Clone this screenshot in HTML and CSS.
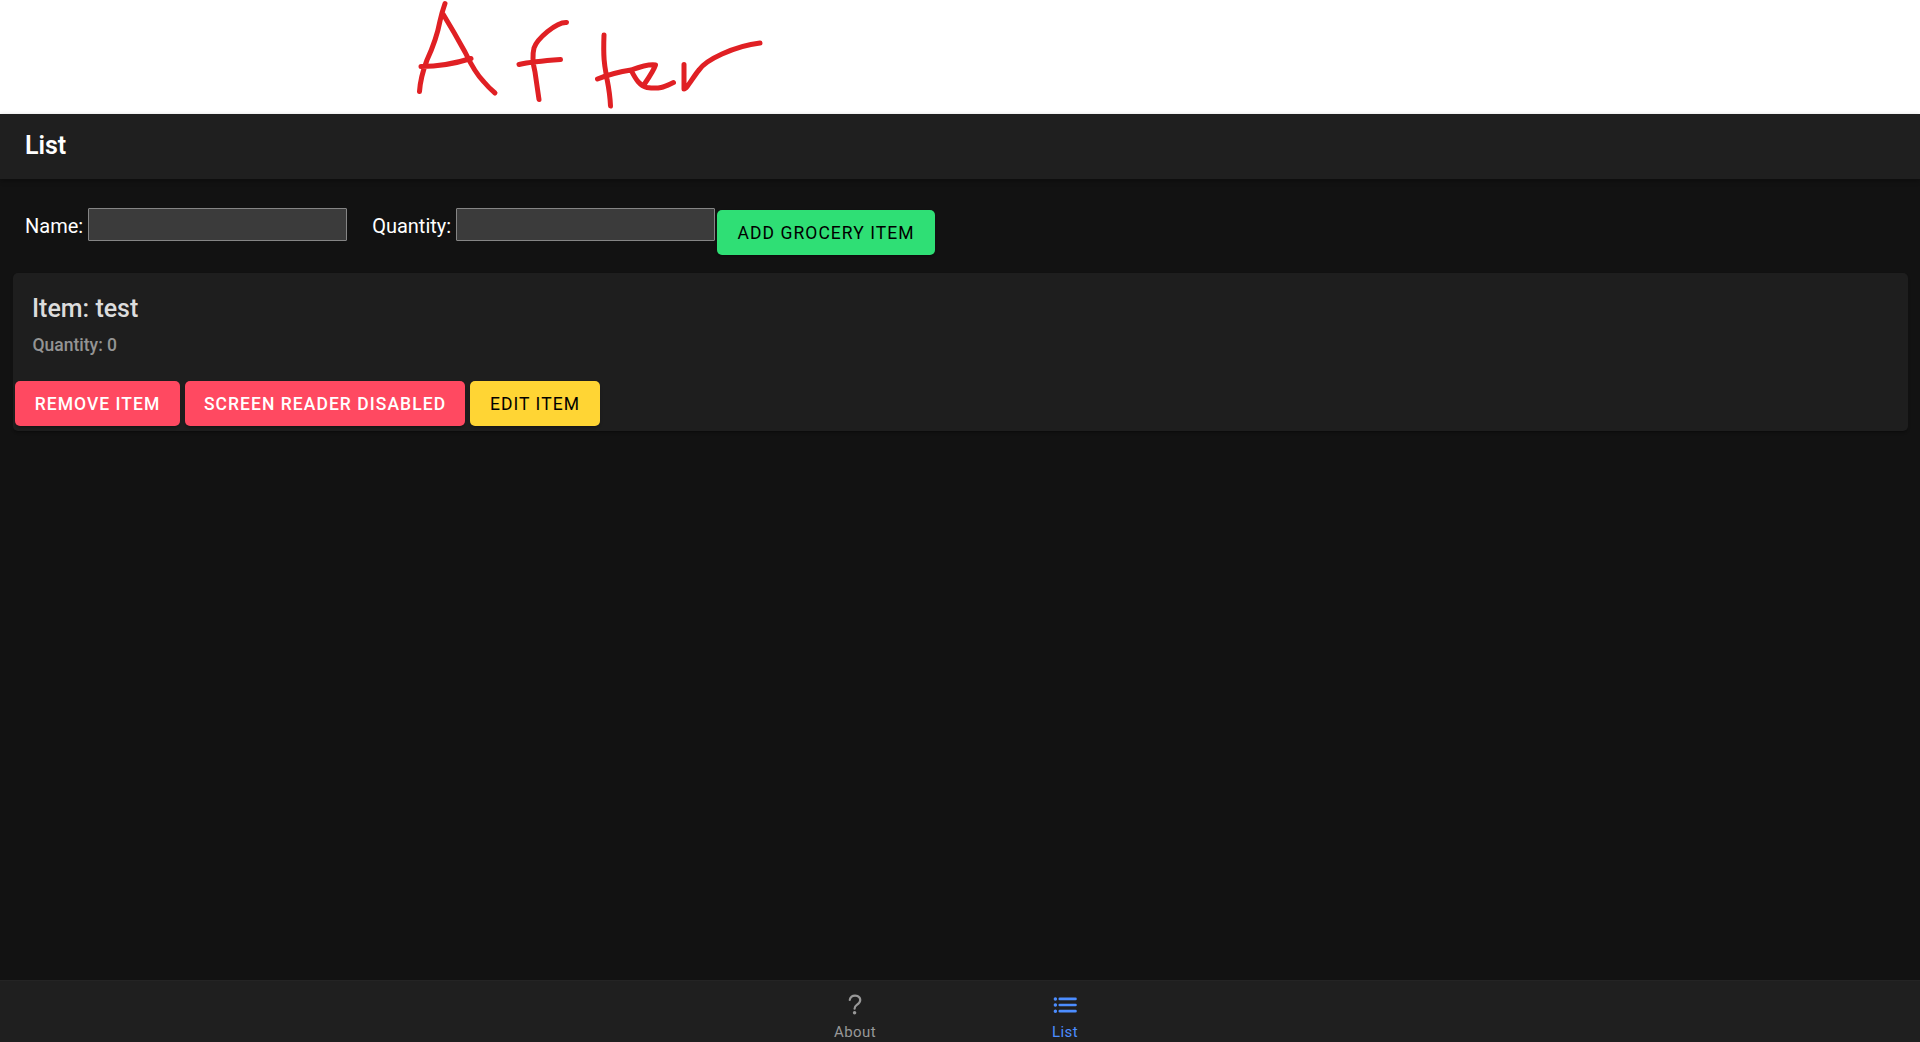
FILE: index.html
```html
<!DOCTYPE html>
<html lang="en">
<head>
<meta charset="utf-8">
<title>List</title>
<link rel="stylesheet" href="styles.css">
</head>
<body>
<div class="note">
  <svg class="ink" width="1920" height="114" viewBox="0 0 1920 114" role="img" aria-label="After">
    <path d="M445 3.500Q442 12 440 21C437 37 433 47 427 60Q420.500 77 419.500 91.500M443 14Q454 32 465 52Q475 73 484 82Q489 88 495 93M421 66.500C437 66.500 452 64.500 471 58.500"/>
    <path d="M566.500 22.500C556 22 537 39 534 48Q531.500 58 535 72L539 99.500M519 64.500Q532 61.500 560.500 59.500"/>
    <path d="M604 35C603 62 605 67 607 79Q610 94 610.500 106M597.500 79C605 76 617 72 631 70C645 65 651 64 655.500 65Q654 70 644.500 84M631 70C636 80 640 86 647 87.500C661 89.500 665 86.500 673.500 82.500M684 64.500V89C687 89 693 77 699 70C703 64 711 59 722 54Q742 45 760 43"/>
  </svg>
</div>
<header class="header"><h1 class="header-title">List</h1></header>
<main class="content">
  <form class="entry">
    <label class="field"><span class="field-label">Name:</span><input class="input" type="text"></label>
    <label class="field"><span class="field-label">Quantity:</span><input class="input" type="text"></label>
    <button class="button success" type="button">Add Grocery Item</button>
  </form>
  <article class="card">
    <h2 class="card-title">Item: test</h2>
    <p class="card-subtitle">Quantity: 0</p>
    <div class="actions">
      <button class="button danger" type="button">Remove Item</button>
      <button class="button danger wide" type="button">Screen Reader Disabled</button>
      <button class="button warning" type="button">Edit Item</button>
    </div>
  </article>
</main>
<nav class="tabs">
  <a class="tab">
    <svg class="icon" viewBox="0 0 512 512"><path d="M160 164s1.440-33 33.540-59.460C212.600 88.830 235.490 84.280 256 84c18.730-.23 35.470 2.940 45.480 7.820C318.590 100.200 352 120.600 352 164c0 45.670-29.180 66.370-62.350 89.180S248 298.360 248 324" fill="none" stroke="currentColor" stroke-width="40" stroke-miterlimit="10" stroke-linecap="round"/><circle cx="248" cy="399.990" r="32" fill="currentColor"/></svg>
    <span>About</span>
  </a>
  <a class="tab selected">
    <svg class="icon" viewBox="0 0 512 512" fill="none" stroke="currentColor" stroke-width="48" stroke-linecap="round"><path d="M160 144h288M160 256h288M160 368h288"/><g stroke-width="32"><circle cx="80" cy="144" r="16"/><circle cx="80" cy="256" r="16"/><circle cx="80" cy="368" r="16"/></g></svg>
    <span>List</span>
  </a>
</nav>
</body>
</html>
```
FILE: styles.css
```css
* { box-sizing: border-box; }
body {
  margin: 0;
  height: 100vh;
  display: flex;
  flex-direction: column;
  overflow: hidden;
  background: #121212;
  color: #fff;
  font-family: Roboto, sans-serif;
}
.note { height: 114px; flex: none; background: #fff; }
.ink {
  display: block;
  fill: none;
  stroke: #e02024;
  stroke-width: 5;
  stroke-linecap: round;
  stroke-linejoin: round;
}
.header {
  height: 65px;
  flex: none;
  display: flex;
  align-items: center;
  padding: 0 25px 1px;
  background: #1f1f1f;
  box-shadow: 0 2px 5px rgba(0, 0, 0, .3);
}
.header-title { margin: 0; font-size: 25px; font-weight: 600; line-height: 30px; }
.content { flex: 1; padding: 29px 12px 0 13px; }
.entry { display: flex; align-items: flex-start; padding-left: 12px; height: 65px; }
.field { display: flex; align-items: flex-start; font-size: 20px; margin-right: 25px; }
.field + .field { margin-right: 2px; }
.field-label { line-height: 33px; padding-top: 2px; }
.input {
  width: 259px;
  height: 33px;
  margin: 0 0 0 5px;
  padding: 0;
  border: 1px solid #858585;
  border-radius: 1px;
  background: #3b3b3b;
  color: #fff;
}
.button {
  height: 45px;
  margin: 0;
  padding: 1px 0 0;
  border: 0;
  border-radius: 5px;
  font: 500 17.5px/44px Roboto, sans-serif;
  letter-spacing: .06em;
  text-transform: uppercase;
  white-space: nowrap;
  box-shadow: 0 3px 2px -2px rgba(0, 0, 0, .2), 0 2px 3px rgba(0, 0, 0, .14);
}
.success { width: 218px; margin-top: 2px; background: #2fdf75; color: #000; font-weight: 450; }
.danger { width: 165px; background: #ff4961; color: #fff; }
.wide { width: 280px; }
.warning { width: 130px; background: #ffd534; color: #000; font-weight: 450; }
.card {
  height: 158px;
  padding: 21px 2px 5px;
  border-radius: 5px;
  background: #1e1e1e;
  box-shadow: 0 3px 2px -2px rgba(0, 0, 0, .2), 0 2px 3px rgba(0, 0, 0, .14);
}
.card-title { margin: 0 17px; font-size: 25px; font-weight: 550; line-height: 30px; color: #dcdcdc; }
.card-subtitle { margin: 11px 17.5px 0; font-size: 17.5px; font-weight: 500; line-height: 21px; color: #949494; }
.actions { display: flex; gap: 5px; margin-top: 25px; }
.tabs {
  height: 62px;
  flex: none;
  display: flex;
  justify-content: center;
  border-top: 1px solid #242424;
  background: #1f1f1f;
}
.tab {
  width: 210px;
  display: flex;
  flex-direction: column;
  align-items: center;
  padding-top: 10px;
  font-size: 15px;
  line-height: 18px;
  letter-spacing: .03em;
  color: #989898;
}
.selected { color: #4c8dff; }
.icon { width: 28px; height: 28px; margin-bottom: 4px; }
```
